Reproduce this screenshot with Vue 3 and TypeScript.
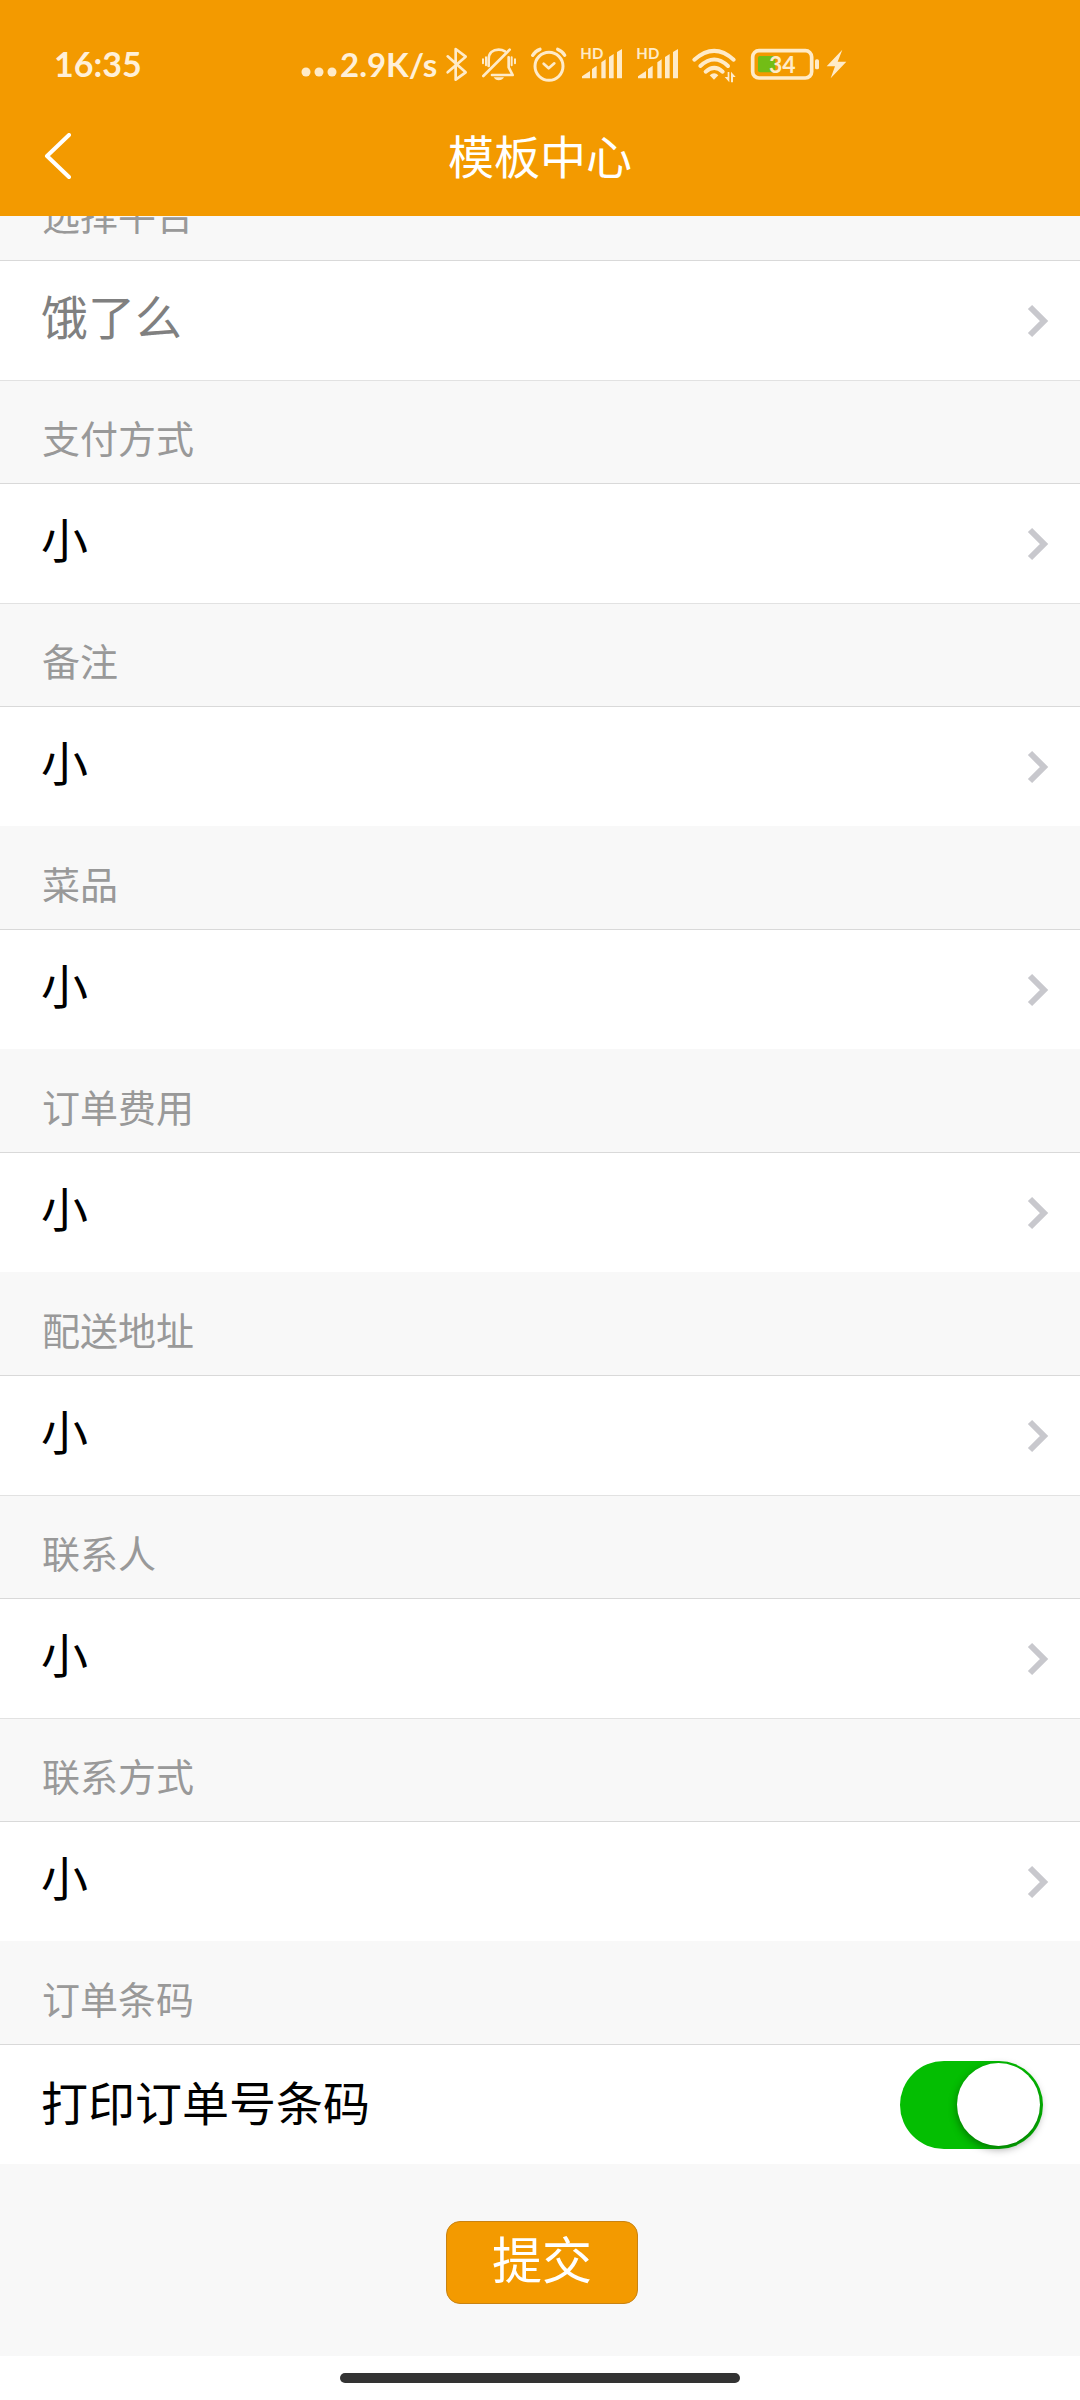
<script setup lang="ts">
import { reactive, ref } from 'vue'

interface Field {
  id: string
  label: string
  options: string[]
  ruled: boolean
  muted?: boolean
}

const sizes = ['小', '中', '大']

const fields: Field[] = [
  { id: 'platform', label: '选择平台', options: ['饿了么'], ruled: true, muted: true },
  { id: 'payment', label: '支付方式', options: sizes, ruled: true },
  { id: 'remark', label: '备注', options: sizes, ruled: false },
  { id: 'dishes', label: '菜品', options: sizes, ruled: false },
  { id: 'fees', label: '订单费用', options: sizes, ruled: false },
  { id: 'address', label: '配送地址', options: sizes, ruled: true },
  { id: 'contact', label: '联系人', options: sizes, ruled: true },
  { id: 'phone', label: '联系方式', options: sizes, ruled: false },
]

const values = reactive<Record<string, string>>(
  Object.fromEntries(fields.map((f) => [f.id, f.options[0]])),
)
const printBarcode = ref(true)
</script>

<template>
  <div class="page">
    <header class="header">
      <div class="status">
        <span class="time">16:35</span>
        <div class="indicators">
          <span class="speed">
            <svg class="dots" width="37" height="10" viewBox="0 0 37 10" aria-hidden="true">
              <circle cx="5" cy="5" r="4.5" /><circle cx="18" cy="5" r="4.5" /><circle cx="31" cy="5" r="4.5" />
            </svg>
            <span>2.9K/s</span>
          </span>
          <svg class="line" width="22" height="35" viewBox="468 35 66 105" aria-hidden="true">
            <path d="M473 63 L527 111 L497 133 V41 L527 64 L473 111" stroke-width="8" />
          </svg>
          <svg class="line" width="36" height="35" viewBox="576 35 108 105" aria-hidden="true">
            <path d="M583 122 L662 43" stroke-width="8" />
            <path d="M599 92 V72 C599 52 612 43 629 43 C637 43 643 45 648 48 M659 66 V96 L671 119 H609" stroke-width="8" />
            <path d="M582 72 V84 M591 66 V90 M668 66 V90 M678 72 V84" stroke-width="6" />
            <path class="solid" d="M614 126 H645 Q640 135 629 135 Q619 135 614 126 Z" />
          </svg>
          <svg class="line" width="37" height="35" viewBox="726 35 111 105" aria-hidden="true">
            <circle cx="783" cy="93" r="42" stroke-width="9" />
            <path d="M767 85 L782 99 L799 84" stroke-width="8" />
            <path d="M734 60 Q742 47 756 42 M809 42 Q823 47 830 60" stroke-width="10" />
          </svg>
          <svg v-for="n in 2" :key="n" width="43" height="35" viewBox="30 35 129 105" aria-hidden="true">
            <text class="hd" x="31" y="72">HD</text>
            <path d="M36 129 V123 L60 107 V129 Z M66 129 V101 L80 91 V129 Z M94 129 V81 L107 72 V129 Z M117 129 V65 L131 56 V129 Z M141 129 V50 L156 41 V129 Z" />
          </svg>
          <svg class="line" width="45" height="35" viewBox="363 35 135 105" aria-hidden="true">
            <path d="M370 73 Q430 20 488 73 M388 92 Q430 53 471 92 M404 109 Q430 86 455 109" stroke-width="12" />
            <path class="solid" d="M416 120 Q430 108 442 120 L429 133 Z" />
            <path class="solid" d="M470 110 H475 V141 L461 125 H470 Z M480 141 V109 L494 125 H486 V141 Z" />
          </svg>
          <svg width="97" height="35" viewBox="537 35 291 105" aria-hidden="true">
            <rect class="shell" x="545" y="46" width="177" height="82" rx="19" />
            <rect class="charge" x="561" y="62" width="52" height="49" rx="6" />
            <rect x="732" y="72" width="12" height="30" rx="5" />
            <text class="level" x="594" y="114">34</text>
            <path d="M814 43 L767 93 H792 L779 129 L826 79 H800 Z" />
          </svg>
        </div>
      </div>
      <nav class="nav">
        <button class="back" type="button" aria-label="返回">
          <svg width="28" height="48" viewBox="0 0 28 48" aria-hidden="true">
            <path d="M25 2 L3 23 L25 44" />
          </svg>
        </button>
        <h1 class="title">模板中心</h1>
      </nav>
    </header>

    <main class="content">
      <form class="form" @submit.prevent>
        <template v-for="f in fields" :key="f.id">
          <label class="label" :for="f.id">{{ f.label }}</label>
          <div class="row" :class="{ ruled: f.ruled }">
            <select :id="f.id" v-model="values[f.id]" class="select" :class="{ muted: f.muted }">
              <option v-for="o in f.options" :key="o" :value="o">{{ o }}</option>
            </select>
            <svg class="chevron" width="24" height="36" viewBox="0 0 24 36" aria-hidden="true">
              <path d="M4 4 L18 18 L4 32" />
            </svg>
          </div>
        </template>
        <h2 class="label">订单条码</h2>
        <div class="row toggle">
          <label for="barcode">打印订单号条码</label>
          <input id="barcode" v-model="printBarcode" class="switch" type="checkbox" role="switch" />
        </div>
        <div class="actions">
          <button class="submit" type="submit">提交</button>
        </div>
      </form>
    </main>

    <footer class="gesture"><div class="pill"></div></footer>
  </div>
</template>

<style>
body {
  margin: 0;
  background: #fff;
}
</style>

<style scoped>
.page {
  display: flex;
  flex-direction: column;
  min-height: 100vh;
  font-family: "Noto Sans CJK SC", "Noto Sans", sans-serif;
  color: #000;
}

.header {
  position: relative;
  z-index: 1;
  padding-bottom: 20px;
  background: #f39a00;
  color: #fff;
}

.status {
  display: flex;
  align-items: center;
  height: 105px;
  padding: 12px 54px 0;
  color: #fff0d8;
  font-family: Lato, sans-serif;
  font-weight: 700;
}

.time {
  width: 247px;
  padding-bottom: 2px;
  font-size: 34px;
}

.indicators {
  display: flex;
  align-items: center;
  gap: 13px;
}

.indicators svg {
  flex: none;
  overflow: visible;
  fill: #ffebc8;
}

.speed {
  display: flex;
  align-items: baseline;
  gap: 2px;
  width: 132px;
  padding-bottom: 2px;
  font-size: 33px;
  white-space: nowrap;
}

.indicators .dots {
  margin-bottom: -2px;
}

.indicators .line {
  fill: none;
  stroke: #ffebc8;
  stroke-linecap: round;
  stroke-linejoin: round;
}

.line .solid {
  fill: #ffebc8;
  stroke: none;
}

.hd {
  font: 700 45px Lato, sans-serif;
}

.indicators .shell {
  fill: none;
  stroke: #ffebc8;
  stroke-width: 11;
}

.charge {
  fill: #72bd16;
}

.level {
  font: 700 69px Lato, sans-serif;
}

.nav {
  display: grid;
  grid-template-columns: 120px 1fr 120px;
  align-items: center;
  height: 79px;
}

.back {
  display: flex;
  width: 100%;
  padding: 0 0 0 44px;
  border: 0;
  background: none;
}

.back path {
  fill: none;
  stroke: #fff;
  stroke-width: 4;
  stroke-linecap: round;
  stroke-linejoin: round;
}

.title {
  margin: 0;
  padding-bottom: 4px;
  font-size: 46px;
  font-weight: 400;
  line-height: 75px;
  text-align: center;
}

.content {
  flex: 1;
  background: #f8f8f8;
}

/* The list is scrolled so that its first heading slides under the header. */
.form {
  margin-top: -58px;
}

.label {
  display: block;
  box-sizing: border-box;
  height: 103px;
  margin: 0;
  padding: 28px 42px 0;
  border-bottom: 1px solid #d9d9d9;
  color: #999;
  font-size: 38px;
  font-weight: 400;
  line-height: 56px;
}

.row {
  display: grid;
  align-items: center;
  box-sizing: border-box;
  height: 120px;
  border-bottom: 1px solid #f8f8f8;
  background: #fff;
  font-size: 47px;
}

.row.ruled {
  border-bottom-color: #e2e2e2;
}

.select,
.chevron {
  grid-area: 1 / 1;
}

.select {
  width: 100%;
  height: 119px;
  margin: 0;
  padding: 0 90px 12px 41px;
  border: 0;
  outline: 0;
  appearance: none;
  background: none;
  color: #000;
  font: inherit;
}

.select.muted {
  color: #808080;
}

.chevron {
  justify-self: end;
  margin-right: 30px;
  pointer-events: none;
}

.chevron path {
  fill: none;
  stroke: #c8c8cd;
  stroke-width: 6;
}

.toggle {
  grid-template-columns: 1fr auto;
  padding: 0 37px 0 41px;
}

.toggle label {
  padding-bottom: 8px;
}

.switch {
  width: 143px;
  height: 88px;
  margin: 0;
  padding: 2px 3px;
  box-sizing: border-box;
  appearance: none;
  border-radius: 44px;
  background: #dfdfdf;
}

.switch::before {
  content: "";
  display: block;
  width: 83px;
  height: 83px;
  border-radius: 50%;
  background: #fff;
  box-shadow: 0 3px 9px rgba(0, 0, 0, 0.4);
}

.switch:checked {
  background: #04be02;
}

.switch:checked::before {
  margin-left: auto;
}

.actions {
  display: flex;
  justify-content: center;
  padding: 56px 0 52px 4px;
}

.submit {
  width: 192px;
  height: 83px;
  padding: 0 0 12px;
  border: 1px solid #c98312;
  border-radius: 14px;
  background: #f39a00;
  color: #fff;
  font: inherit;
  font-size: 50px;
  line-height: 68px;
}

.gesture {
  display: flex;
  justify-content: center;
  padding: 17px 0;
  background: #fff;
}

.pill {
  width: 37%;
  height: 10px;
  border-radius: 5px;
  background: #333;
}
</style>
